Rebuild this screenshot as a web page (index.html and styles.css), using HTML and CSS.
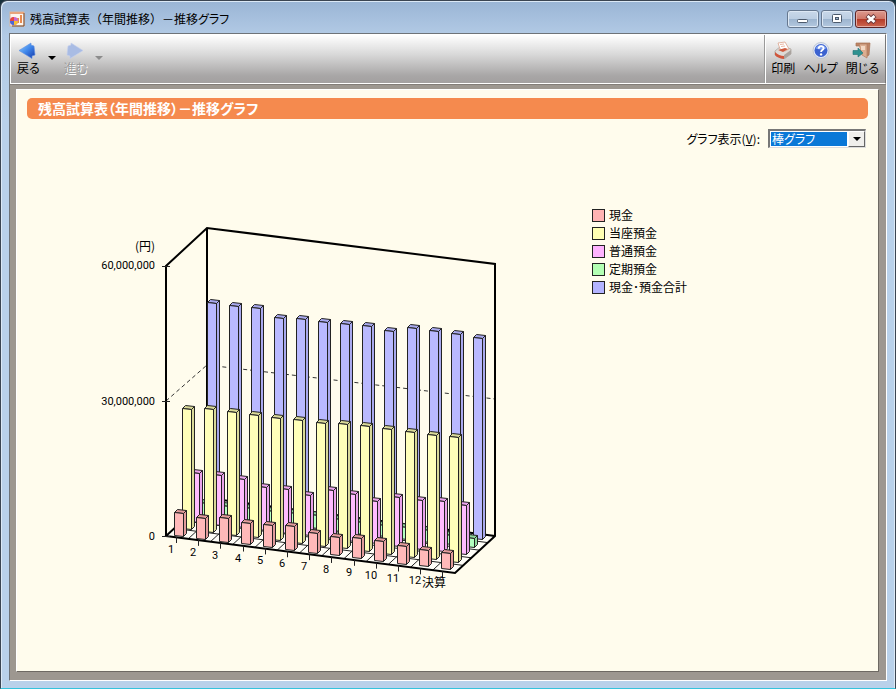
FILE: index.html
```html
<!DOCTYPE html>
<html lang="ja">
<head>
<meta charset="utf-8">
<title>残高試算表（年間推移）－推移グラフ</title>
<link rel="stylesheet" href="styles.css">
</head>
<body>
<div class="window">
  <header class="titlebar">
    <svg class="app-icon" viewBox="0 0 16 16" aria-hidden="true">
      <rect x="1" y="1" width="14" height="14" fill="#fdf6ee" stroke="#d9b79c"/>
      <path d="M1 1h14v2H1z" fill="#e8a57c"/>
      <path d="M15 2v13H3" fill="none" stroke="#7c4a2a"/>
      <path d="M8 12V7h2v5zM11 12V4h2v8z" fill="#e98a4f"/>
      <circle cx="5" cy="10" r="4" fill="#c86ad0"/>
      <path d="M5 10V6a4 4 0 0 0-4 4z" fill="#e8493d"/>
      <path d="M5 10H1a4 4 0 0 0 4 4z" fill="#4b67d6"/>
      <path d="M5 10v4a4 4 0 0 0 4-4z" fill="#f4bf35"/>
    </svg>
    <h1 class="window-title">残高試算表（年間推移）－推移<span class="kana">グラフ</span></h1>
    <div class="window-buttons">
      <button class="win-button" type="button" aria-label="最小化">
        <svg viewBox="0 0 30 16"><rect x="9.500" y="8.500" width="10" height="3" rx="1" fill="#fff" stroke="#4c5a6c"/></svg>
      </button>
      <button class="win-button" type="button" aria-label="最大化">
        <svg viewBox="0 0 30 16"><rect x="10.500" y="3.500" width="9" height="8" rx="1" fill="#fff" stroke="#4c5a6c"/><rect x="13.500" y="6.500" width="3" height="2" fill="#9fb4cd" stroke="#4c5a6c"/></svg>
      </button>
      <button class="win-button close" type="button" aria-label="閉じる">
        <svg viewBox="0 0 30 16"><path d="M11 4.500l8 7M19 4.500l-8 7" stroke="#6b3a3c" stroke-width="4.500"/><path d="M11.500 5l7 6M18.500 5l-7 6" stroke="#fff" stroke-width="2.800"/></svg>
      </button>
    </div>
  </header>

  <div class="client">
    <nav class="toolbar">
      <div class="tool-group">
        <button class="tool" type="button">
          <svg viewBox="0 0 20 18" aria-hidden="true">
            <defs><linearGradient id="blue" x1="0" y1="0" x2="1" y2="1"><stop offset="0" stop-color="#8fd0ff"/><stop offset=".5" stop-color="#3f86ea"/><stop offset="1" stop-color="#1538a8"/></linearGradient></defs>
            <path d="M1 9.500L13 2v2l3 1 1 9-3 1v2.500z" fill="url(#blue)" stroke="#5f8fe0" stroke-width=".6"/>
          </svg>
          <span>戻る</span>
        </button>
        <button class="drop" type="button" aria-label="戻る履歴"><svg viewBox="0 0 8 4"><path d="M0 0h8L4 4z" fill="#000"/></svg></button>
        <button class="tool disabled" type="button" disabled>
          <svg viewBox="0 0 20 18" aria-hidden="true"><path d="M18 9.500L6 2v2L3 5l-1 9 3 1v2.500z" fill="#a9bce4" stroke="#c2cfec" stroke-width=".6"/></svg>
          <span>進む</span>
        </button>
        <button class="drop" type="button" disabled aria-label="進む履歴"><svg viewBox="0 0 8 4"><path d="M0 0h8L4 4z" fill="#8c8c8c"/></svg></button>
      </div>
      <div class="tool-group actions">
        <button class="tool" type="button">
          <svg viewBox="0 0 20 18" aria-hidden="true">
            <path d="M2 10l6-5 10 3v5l-7 5-9-4z" fill="#dedad6" stroke="#a39b95" stroke-width=".7"/>
            <path d="M2 11q4 4 9 4v3q-7-1-9-4z" fill="#d0563c"/>
            <path d="M11 14l7-5v4l-7 5z" fill="#a9a39e"/>
            <path d="M7 8L5 2l7-1 4 7-4 2z" fill="#fff" stroke="#dba48e" stroke-width=".8"/>
            <path d="M5 9l7-2 3 1-5 3z" fill="#cf5a3e"/>
            <path d="M7 3.500l4-.5M8 5.500l4-.5" stroke="#e9b7a4"/>
          </svg>
          <span>印刷</span>
        </button>
        <button class="tool" type="button">
          <svg viewBox="0 0 20 18" aria-hidden="true">
            <circle cx="10" cy="9.500" r="8" fill="#e3e9f5" stroke="#b3bccd" stroke-width=".8"/>
            <circle cx="10" cy="9.500" r="6.500" fill="#3b62d0"/>
            <path d="M4.500 7.500a6 6 0 0 1 11 0q-5 2-11 0z" fill="#7a9cf0"/>
            <path d="M7.700 7.700c0-3.400 4.900-3.200 4.900-.4 0 1.800-2.500 1.800-2.500 3.600" fill="none" stroke="#fff" stroke-width="1.900"/>
            <circle cx="10.100" cy="13.400" r="1.200" fill="#fff"/>
          </svg>
          <span>ヘルプ</span>
        </button>
        <button class="tool" type="button">
          <svg viewBox="0 0 20 18" aria-hidden="true">
            <path d="M4 2h14l-1 12-3 2V5H4z" fill="#bd8466" stroke="#a87254" stroke-width=".7"/>
            <path d="M7 3h8v14l-5-3z" fill="#dcae91" stroke="#b07d60" stroke-width=".7"/>
            <path d="M9 5h4v4H9z" fill="#f4d9c4"/>
            <path d="M1 9.500h5V7l5 5-5 4v-2.500H1z" fill="#2f9290" stroke="#1f7276" stroke-width=".6"/>
          </svg>
          <span>閉じる</span>
        </button>
      </div>
    </nav>

    <div class="frame">
      <main class="panel">
        <h2 class="heading">残高試算表（年間推移）－推移グラフ</h2>
        <div class="options">
          <label for="chart-type">グラフ表示(<u>V</u>):</label>
          <div class="combo">
            <select id="chart-type"><option>棒グラフ</option></select>
            <span class="combo-arrow" aria-hidden="true"><svg viewBox="0 0 8 4"><path d="M0 0h8L4 4z" fill="#000"/></svg></span>
          </div>
        </div>
        <div class="chart-area">
          <svg class="chart" id="chart" viewBox="90 200 420 400" role="img" aria-label="推移グラフ"></svg>
          <ul class="legend">
            <li><i class="swatch cash"></i>現金</li>
            <li><i class="swatch current"></i>当座預金</li>
            <li><i class="swatch ordinary"></i>普通預金</li>
            <li><i class="swatch fixed"></i>定期預金</li>
            <li><i class="swatch total"></i>現金･預金合計</li>
          </ul>
        </div>
      </main>
    </div>
  </div>
</div>
<script src="chart.js"></script>
</body>
</html>
```
FILE: styles.css
```css
* { box-sizing: border-box; }

body {
  margin: 0;
  background: #16303c;
  color: #000;
  font: 12px/16px "Noto Sans CJK JP", sans-serif;
}

button, select { font: inherit; color: inherit; }
svg { display: block; }

.window {
  display: flex;
  flex-direction: column;
  min-height: 100vh;
  padding: 0 8px 7px;
  border: 1px solid #3b4552;
  border-bottom-color: #35c3dc;
  border-radius: 7px 7px 0 0;
  background: linear-gradient(#9ab5d5, #b2cae5 34px, #b9d1ea 120px, #b9d1ea);
  box-shadow: inset 1px 1px 0 #dce9f6, inset -1px 0 0 #dce9f6;
}

.titlebar {
  display: flex;
  align-items: center;
  height: 32px;
  padding-top: 4px;
}

.app-icon { width: 16px; height: 16px; }

.window-title {
  flex: 1;
  margin: 0 0 0 5px;
  font-size: 12px;
  font-weight: 400;
}

.kana { font-feature-settings: "palt"; }

.window-buttons { display: flex; gap: 2px; }

.win-button {
  width: 32px;
  height: 18px;
  padding: 0;
  border: 1px solid #66788f;
  border-radius: 3px;
  background: linear-gradient(#c9d8e9, #bccee2 48%, #9db5cf 52%, #b3c8df);
  box-shadow: inset 0 0 0 1px #dde8f4;
}

.win-button svg { width: 30px; height: 16px; }

.win-button.close {
  border-color: #5c2426;
  background: linear-gradient(#dc9a8f, #cf7768 48%, #b53c29 52%, #cc6650);
  box-shadow: inset 0 0 0 1px #e5aca2;
}

.client {
  display: flex;
  flex: 1;
  flex-direction: column;
  border: 1px solid #6e7378;
  border-right-color: #fff;
  border-bottom-color: #fff;
}

.toolbar {
  display: flex;
  justify-content: space-between;
  height: 50px;
  border: 1px solid #fff;
  border-right-color: #777;
  background: linear-gradient(#fff, #d9d9d9 40%, #a8a6a6 85%, #a3a0a0);
}

.tool-group { display: flex; align-items: flex-start; padding: 6px 0 0 6px; }

.actions {
  gap: 8px;
  padding: 6px 6px 0 5px;
  border-left: 1px solid #fff;
  box-shadow: -1px 0 0 #9a9a9a;
}

.tool {
  display: flex;
  flex-direction: column;
  align-items: center;
  padding: 0;
  border: 0;
  background: none;
  white-space: nowrap;
  font-feature-settings: "palt";
}

.tool svg { width: 20px; height: 18px; }
.tool span { line-height: 18px; }
.tool.disabled { color: #9d9d9d; text-shadow: 1px 1px 0 #fff; }

.drop { padding: 15px 8px 6px; border: 0; background: none; }
.drop svg { width: 8px; height: 4px; }

.frame {
  display: flex;
  flex: 1;
  padding: 4px 7px 8px 6px;
  border-top: 1px solid #827d78;
  background: #9d9790;
}

.panel {
  flex: 1;
  padding: 8px 10px;
  border: 1px solid #fff;
  border-right-color: #6e6963;
  border-bottom-color: #6e6963;
  background: #fffced;
}

.heading {
  height: 21px;
  margin: 0;
  padding-left: 11px;
  border-radius: 5px;
  background: #f58a4e;
  color: #fff;
  font-size: 14px;
  line-height: 20px;
  font-weight: 700;
  font-feature-settings: "palt";
}

.options {
  display: flex;
  justify-content: flex-end;
  align-items: center;
  gap: 8px;
  margin: 10px 2px 0 0;
}

.options label { font-feature-settings: "palt"; }

.combo {
  display: grid;
  grid-template-columns: 1fr 17px;
  width: 98px;
  height: 19px;
  border: 2px solid #777;
  border-right: 1px solid #ddd;
  border-bottom: 1px solid #ddd;
  background: #fff;
}

.combo select {
  grid-area: 1 / 1 / 2 / 3;
  width: 100%;
  height: 16px;
  padding: 0 1px;
  border: 1px solid #fff;
  border-right-width: 18px;
  border-radius: 0;
  outline: 0;
  appearance: none;
  background: #0a78d7;
  color: #fff;
  line-height: 14px;
  font-feature-settings: "palt";
}

.combo-arrow {
  display: grid;
  grid-area: 1 / 2;
  place-items: center;
  border: 1px solid #fff;
  border-right-color: #666;
  border-bottom-color: #666;
  background: #f0efec;
  pointer-events: none;
}

.combo-arrow svg { width: 8px; height: 4px; }

.chart-area {
  display: flex;
  align-items: flex-start;
  gap: 82px;
  padding: 52px 0 0 63px;
}

.chart { flex: none; width: 420px; height: 400px; }

.chart text { font: 11px "Roboto", "Noto Sans CJK JP", sans-serif; }
.chart .amount { text-anchor: end; }
.chart .unit { font-size: 12px; font-family: "Noto Sans CJK JP", sans-serif; text-anchor: end; font-feature-settings: "palt"; }
.chart .month { text-anchor: middle; }
.chart .closing { font-size: 12px; }

.edge { fill: none; stroke: #000; stroke-width: 2; }
.floor { fill: #fffef8; }
.grid { fill: none; stroke: #222; stroke-width: 1; }
.dashed { fill: none; stroke: #333; stroke-dasharray: 4 3; }
.face { stroke: #222; stroke-width: 1; stroke-linejoin: round; }

.legend { margin: 0; padding: 6px 0 0; list-style: none; }
.legend li { display: flex; align-items: center; gap: 4px; height: 18px; }
.swatch { width: 13px; height: 13px; border: 1px solid #222; }

.cash { background: #ffb3b3; }
.current { background: #ffffb3; }
.ordinary { background: #ffb3ff; }
.fixed { background: #b3ffb3; }
.total { background: #b3b3ff; }
```
FILE: chart.js
```js
const svg = document.getElementById('chart');

function add(tag, attrs, text) {
  const el = document.createElementNS('http://www.w3.org/2000/svg', tag);
  for (const name in attrs) el.setAttribute(name, attrs[name]);
  if (text) el.textContent = text;
  svg.appendChild(el);
}

const months = ['1', '2', '3', '4', '5', '6', '7', '8', '9', '10', '11', '12', '決算'];

// Series from the back row to the front; x and base are the first and last bar.
const series = [
  { x: [207, 473], base: [505, 538], fill: '#b9b9ff', side: '#a9a9ee',
    tops: [302, 305, 307, 317, 318, 321, 323, 325, 330, 327, 330, 333, 337] },
  { x: [198, 465], base: [514, 546], fill: '#b3ffc0', side: '#8fd89b',
    tops: [502, 505, 507, 510, 512, 514, 518, 521, 524, 526, 529, 534, 537] },
  { x: [190, 457], base: [521, 553], fill: '#ffbcff', side: '#eba3eb',
    tops: [472, 474, 478, 486, 488, 494, 489, 493, 500, 496, 499, 500, 504] },
  { x: [182, 449], base: [528, 561], fill: '#ffffb9', side: '#d9d998',
    tops: [408, 408, 411, 414, 417, 419, 422, 423, 425, 428, 431, 434, 436] },
  { x: [174, 441], base: [535, 568], fill: '#ffb9b9', side: '#e39c9c',
    tops: [512, 517, 517, 522, 524, 525, 532, 536, 537, 540, 545, 549, 552] }
];

add('path', { class: 'floor', d: 'M166 536L207 498L495 536L455 573Z' });
for (let i = 1; i < 13; i++) {
  const dx = i * 289 / 13, dy = i * 37 / 13;
  add('path', { class: 'grid', d: `M${166 + dx} ${536 + dy}l41 -38` });
}
for (let k = 1; k < 5; k++) {
  add('path', { class: 'grid', d: `M${166 + k * 8.2} ${536 - k * 7.6}l289 37` });
}
add('path', { class: 'dashed', d: 'M166 401L207 365L495 399' });
add('path', { class: 'edge', d: 'M166 536V266L207 228L495 264V536L455 573L166 536L207 498L495 536M207 228V498' });
for (const y of [266, 401, 536]) add('path', { class: 'grid', d: `M162 ${y + 0.5}h8` });

for (const s of series) {
  s.tops.forEach((top, i) => {
    const x = Math.round(s.x[0] + (s.x[1] - s.x[0]) * i / 12) + 0.5;
    const base = Math.round(s.base[0] + (s.base[1] - s.base[0]) * i / 12) + 0.5;
    const y = top + 0.5;
    add('path', { class: 'face', fill: s.side, d: `M${x + 9} ${y + 1}l3 -3V${base - 2}l-3 3Z` });
    add('path', { class: 'face', fill: s.side, d: `M${x} ${y}l3 -3l9 1l-3 3Z` });
    add('path', { class: 'face', fill: s.fill, d: `M${x} ${y}l9 1V${base + 1}l-9 -1Z` });
  });
}

months.forEach((m, i) => {
  const x = 176 + i * 22.2, y = 537 + i * 2.85;
  const closing = i === months.length - 1;
  add('path', { class: 'grid', d: `M${Math.round(x) + 0.5} ${y}v6` });
  add('text', {
    class: closing ? 'month closing' : 'month',
    x: Math.round(x - (closing ? 8 : 5)),
    y: Math.round(y + 16)
  }, m);
});

add('text', { class: 'unit', x: 155, y: 251 }, '(円)');
add('text', { class: 'amount', x: 155, y: 269 }, '60,000,000');
add('text', { class: 'amount', x: 155, y: 405 }, '30,000,000');
add('text', { class: 'amount', x: 155, y: 540 }, '0');
```
